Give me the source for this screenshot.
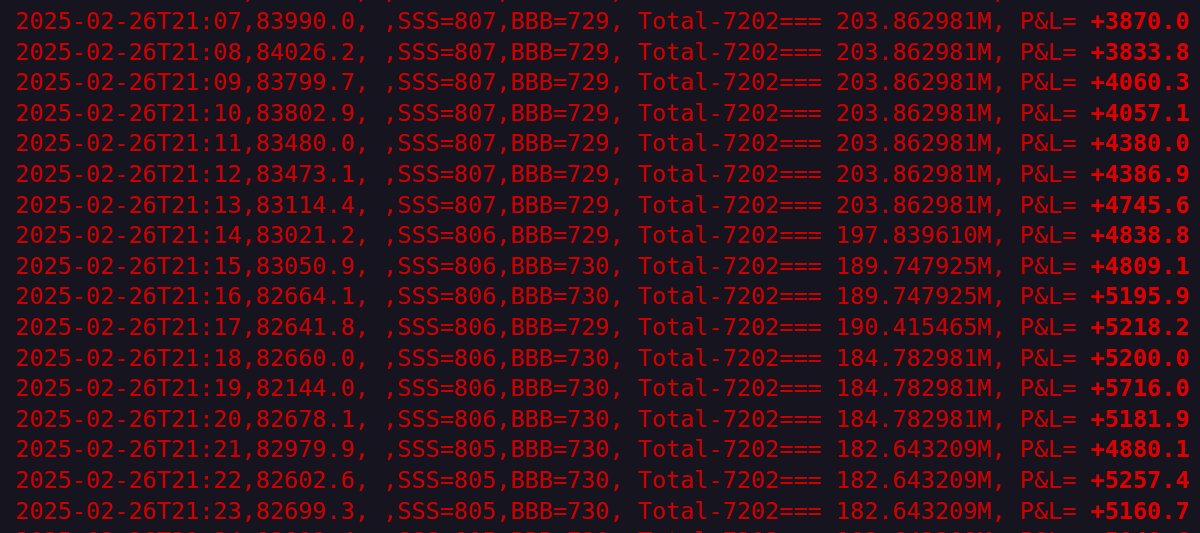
const rows = [
  ["21:06", "84012.5", "807", "729", "203.862981M", "+3847.5"],
  ["21:07", "83990.0", "807", "729", "203.862981M", "+3870.0"],
  ["21:08", "84026.2", "807", "729", "203.862981M", "+3833.8"],
  ["21:09", "83799.7", "807", "729", "203.862981M", "+4060.3"],
  ["21:10", "83802.9", "807", "729", "203.862981M", "+4057.1"],
  ["21:11", "83480.0", "807", "729", "203.862981M", "+4380.0"],
  ["21:12", "83473.1", "807", "729", "203.862981M", "+4386.9"],
  ["21:13", "83114.4", "807", "729", "203.862981M", "+4745.6"],
  ["21:14", "83021.2", "806", "729", "197.839610M", "+4838.8"],
  ["21:15", "83050.9", "806", "730", "189.747925M", "+4809.1"],
  ["21:16", "82664.1", "806", "730", "189.747925M", "+5195.9"],
  ["21:17", "82641.8", "806", "729", "190.415465M", "+5218.2"],
  ["21:18", "82660.0", "806", "730", "184.782981M", "+5200.0"],
  ["21:19", "82144.0", "806", "730", "184.782981M", "+5716.0"],
  ["21:20", "82678.1", "806", "730", "184.782981M", "+5181.9"],
  ["21:21", "82979.9", "805", "730", "182.643209M", "+4880.1"],
  ["21:22", "82602.6", "805", "730", "182.643209M", "+5257.4"],
  ["21:23", "82699.3", "805", "730", "182.643209M", "+5160.7"],
  ["21:24", "82811.4", "805", "730", "182.643209M", "+5048.6"],
];

export default function App() {
  return (
    <div className="w-[1200px] h-[533px] overflow-hidden bg-[#15141f]">
      <div
        className="mt-[-24.5px] pl-[15px] text-[23.5px] leading-[30.6px] text-[#cc0000] whitespace-pre"
        style={{ fontFamily: '"DejaVu Sans Mono", "Liberation Mono", monospace' }}
      >
        {rows.map((r) => (
          <div key={r[0]}>
            {`2025-02-26T${r[0]},${r[1]}, ,SSS=${r[2]},BBB=${r[3]}, Total-7202=== ${r[4]}, P&L= `}
            <span className="font-bold text-[#dd0000]">{r[5]}</span>
          </div>
        ))}
      </div>
    </div>
  );
}
